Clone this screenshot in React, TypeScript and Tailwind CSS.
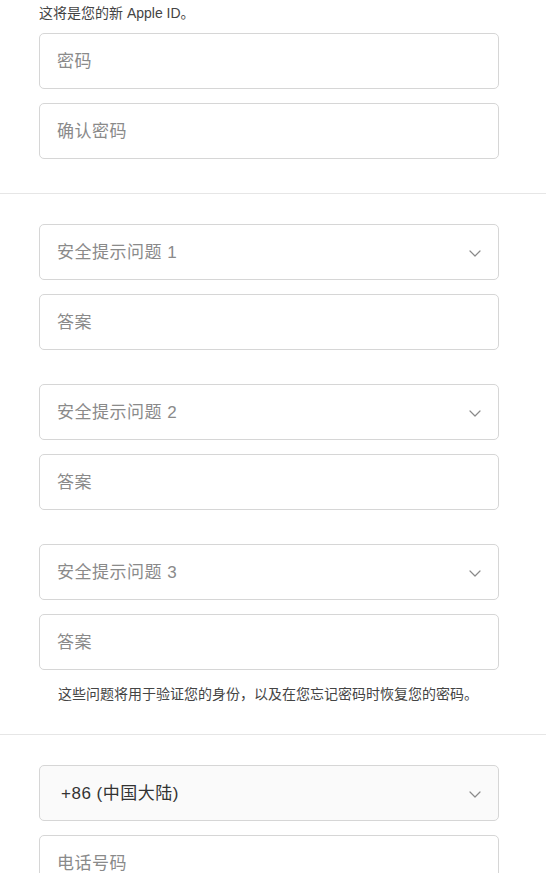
import React from "react";

const font = { fontFamily: '"Liberation Sans", "Noto Sans CJK SC", sans-serif' };

function Chevron() {
  return (
    <svg width="12" height="7" viewBox="0 0 12 7" fill="none" className="shrink-0">
      <path d="M1 1l5 5 5-5" stroke="#8a8a8a" strokeWidth="1.2" strokeLinecap="round" strokeLinejoin="round" />
    </svg>
  );
}

function Field({ label }: { label: string }) {
  return (
    <div className="h-[56px] rounded-[5px] border border-[#d6d6d6] bg-white flex items-center pl-[17px] pr-[18px] pt-[2px]">
      <span className="text-[17px] text-[#8a8a8a] tracking-[0.5px]">{label}</span>
    </div>
  );
}

function Select({ label, filled }: { label: string; filled?: boolean }) {
  return (
    <div
      className={
        filled
          ? "h-[56px] rounded-[5px] border border-[#d6d6d6] flex items-center justify-between pl-[21px] pr-[17px] pt-[2px] bg-[#fafafa]"
          : "h-[56px] rounded-[5px] border border-[#d6d6d6] flex items-center justify-between pl-[17px] pr-[17px] pt-[2px] bg-white"
      }
    >
      <span className={filled ? "text-[17px] tracking-[0.5px] text-[#333]" : "text-[17px] tracking-[0.5px] text-[#8a8a8a]"}>{label}</span>
      <Chevron />
    </div>
  );
}

export default function App() {
  return (
    <div className="w-[546px] h-[873px] overflow-hidden bg-white" style={font}>
      <div className="px-[39px] pr-[47px]">
        <div className="h-[33px] pt-[3px] text-[14px] leading-[20px] text-[#444]">这将是您的新 Apple ID。</div>
        <div className="flex flex-col gap-[14px]">
          <Field label="密码" />
          <Field label="确认密码" />
        </div>
      </div>
      <div className="mt-[34px] h-px bg-[#e6e6e6]" />
      <div className="px-[39px] pr-[47px] pt-[30px] flex flex-col gap-[34px]">
        <div className="flex flex-col gap-[14px]">
          <Select label="安全提示问题 1" />
          <Field label="答案" />
        </div>
        <div className="flex flex-col gap-[14px]">
          <Select label="安全提示问题 2" />
          <Field label="答案" />
        </div>
        <div className="flex flex-col gap-[14px]">
          <Select label="安全提示问题 3" />
          <Field label="答案" />
        </div>
      </div>
      <div className="pl-[58px] pt-[14px] h-[64px] text-[14px] leading-[20px] text-[#444]">
        这些问题将用于验证您的身份，以及在您忘记密码时恢复您的密码。
      </div>
      <div className="h-px bg-[#e6e6e6]" />
      <div className="px-[39px] pr-[47px] pt-[30px] flex flex-col gap-[14px]">
        <Select label="+86 (中国大陆)" filled />
        <Field label="电话号码" />
      </div>
    </div>
  );
}
